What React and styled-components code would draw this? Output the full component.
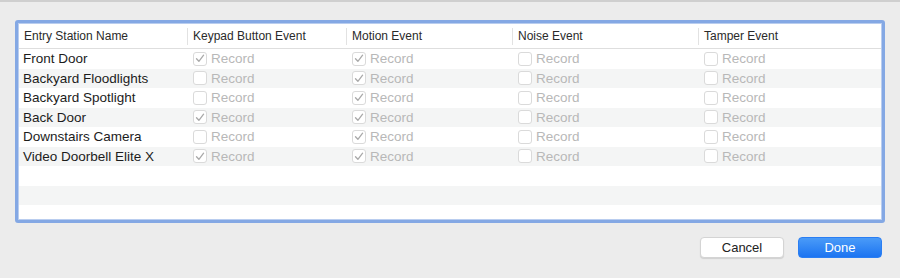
import React from "react";
import styled, { createGlobalStyle } from "styled-components";

const Global = createGlobalStyle`
  html, body { margin: 0; padding: 0; background: #ececec; }
  body { font-family: "Liberation Sans", Arial, sans-serif; -webkit-font-smoothing: antialiased; }
`;

const Sheet = styled.div`
  width: 900px;
  height: 278px;
  box-sizing: border-box;
  background: #ececec;
  border-top: 2px solid #cfcfcf;
  padding: 18px 15px 0 15px;
  display: flex;
  flex-direction: column;
`;

const Frame = styled.div`
  height: 203px;
  box-sizing: border-box;
  border: 3px solid #84a8e4;
  border-radius: 3px;
  background: #ffffff;
  overflow: hidden;
  display: flex;
  flex-direction: column;
  box-shadow: inset 0 0 0 1px #b9cdef;
  padding: 1px;
`;

const cols = "169px 159px 166px 186px 1fr";

const HeaderRow = styled.div`
  display: grid;
  grid-template-columns: ${cols};
  height: 24px;
  border-bottom: 1px solid #dedede;
  align-items: center;
  flex-shrink: 0;
`;

const HeaderCell = styled.div`
  height: 17px;
  display: flex;
  align-items: center;
  padding-left: 5px;
  font-size: 12px;
  color: #2a2a2a;
  border-left: ${(p) => (p.$first ? "none" : "1px solid #e2e2e2")};
  margin-left: ${(p) => (p.$first ? "0" : "-1px")};
  white-space: nowrap;
`;

const Body = styled.div`
  flex: 1;
  overflow: hidden;
`;

const Row = styled.div`
  display: grid;
  grid-template-columns: ${cols};
  height: 19.5px;
  align-items: center;
  background: ${(p) => (p.$alt ? "#f4f5f5" : "#ffffff")};
`;

const NameCell = styled.div`
  padding-left: 4px;
  font-size: 13.5px;
  color: #1c1c1c;
  white-space: nowrap;
`;

const CheckCell = styled.label`
  display: flex;
  align-items: center;
  padding-left: 5px;
  gap: 4px;
`;

const Box = styled.span`
  width: 14px;
  height: 14px;
  box-sizing: border-box;
  border: 1px solid #dadada;
  border-radius: 3px;
  background: #ffffff;
  display: flex;
  align-items: center;
  justify-content: center;
`;

const RecordText = styled.span`
  font-size: 13.5px;
  color: #b8b8b8;
`;

const Buttons = styled.div`
  display: flex;
  justify-content: flex-end;
  gap: 14px;
  padding: 14px 3px 0 0;
`;

const Button = styled.button`
  width: 84px;
  height: 21px;
  box-sizing: border-box;
  border-radius: 4px;
  font-family: "Liberation Sans", Arial, sans-serif;
  font-size: 13px;
  padding: 0;
  cursor: pointer;
  border: ${(p) => (p.$primary ? "1px solid #2a7ef3" : "1px solid #d4d4d4")};
  background: ${(p) =>
    p.$primary ? "linear-gradient(#4a9bf8, #1c74f1)" : "#ffffff"};
  color: ${(p) => (p.$primary ? "#ffffff" : "#222222")};
  box-shadow: ${(p) => (p.$primary ? "none" : "0 1px 1px rgba(0,0,0,0.12)")};
`;

const Check = () => (
  <svg width="10" height="9" viewBox="0 0 10 9">
    <path d="M1.5 4.8 L3.9 7.3 L8.6 1.2" fill="none" stroke="#a9a9a9" strokeWidth="1.3" strokeLinecap="round" strokeLinejoin="round" />
  </svg>
);

const data = [
  ["Front Door", [1, 1, 0, 0]],
  ["Backyard Floodlights", [0, 1, 0, 0]],
  ["Backyard Spotlight", [0, 1, 0, 0]],
  ["Back Door", [1, 1, 0, 0]],
  ["Downstairs Camera", [0, 1, 0, 0]],
  ["Video Doorbell Elite X", [1, 1, 0, 0]],
];

const headers = ["Entry Station Name", "Keypad Button Event", "Motion Event", "Noise Event", "Tamper Event"];

export default function App() {
  return (
    <>
      <Global />
      <Sheet>
        <Frame>
          <HeaderRow>
            {headers.map((h, i) => (
              <HeaderCell key={h} $first={i === 0}>{h}</HeaderCell>
            ))}
          </HeaderRow>
          <Body>
            {data.map(([name, checks], r) => (
              <Row key={name} $alt={r % 2 === 1}>
                <NameCell>{name}</NameCell>
                {checks.map((c, i) => (
                  <CheckCell key={i}>
                    <Box>{c ? <Check /> : null}</Box>
                    <RecordText>Record</RecordText>
                  </CheckCell>
                ))}
              </Row>
            ))}
            {[6, 7, 8].map((r) => (
              <Row key={r} $alt={r % 2 === 1} />
            ))}
          </Body>
        </Frame>
        <Buttons>
          <Button>Cancel</Button>
          <Button $primary>Done</Button>
        </Buttons>
      </Sheet>
    </>
  );
}
